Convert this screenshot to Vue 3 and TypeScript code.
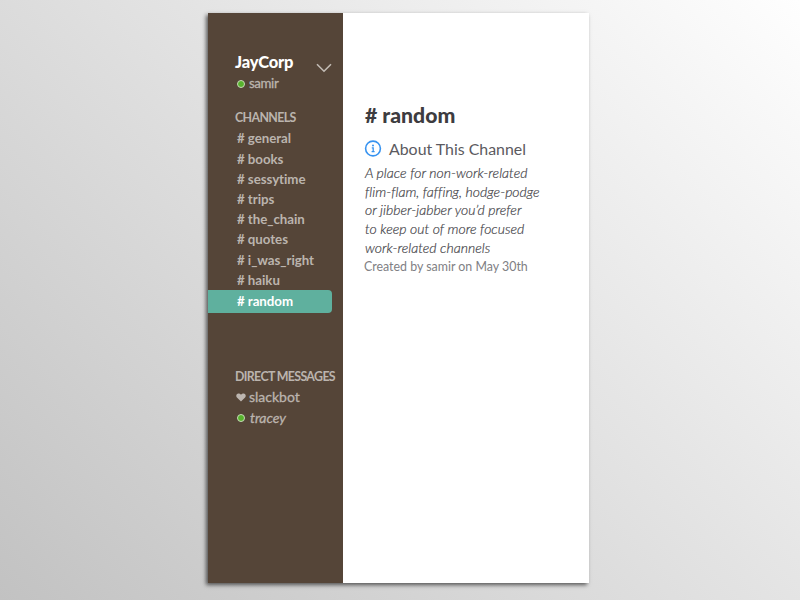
<script setup lang="ts">
interface Channel {
  name: string
  active?: boolean
}

const channels: Channel[] = [
  { name: 'general' },
  { name: 'books' },
  { name: 'sessytime' },
  { name: 'trips' },
  { name: 'the_chain' },
  { name: 'quotes' },
  { name: 'i_was_right' },
  { name: 'haiku' },
  { name: 'random', active: true },
]

const purpose: string[] = [
  'A place for non-work-related',
  'flim-flam, faffing, hodge-podge',
  'or jibber-jabber you’d prefer',
  'to keep out of more focused',
  'work-related channels',
]
</script>

<template>
  <div class="stage">
    <div class="window">
      <aside class="sidebar">
        <header class="team">
          <div class="identity">
            <h1 class="team-name">JayCorp</h1>
            <div class="user"><span class="presence"></span><span>samir</span></div>
          </div>
          <svg class="chevron" width="16" height="10" viewBox="0 0 16 10">
            <path d="M1 1.2 L8 8.2 L15 1.2" fill="none" stroke="#c3bcb5" stroke-width="1.6" />
          </svg>
        </header>
        <h2 class="section">CHANNELS</h2>
        <ul class="channels">
          <li v-for="c in channels" :key="c.name" class="channel" :class="{ active: c.active }"># {{ c.name }}</li>
        </ul>
        <h2 class="section direct">DIRECT MESSAGES</h2>
        <div class="dm">
          <svg class="heart" width="10" height="9" viewBox="0 0 10 9">
            <path d="M5 8.6 L0.9 4.6 C-0.3 3.2 0.2 0.5 2.5 0.4 C3.7 0.4 4.5 1 5 1.8 C5.5 1 6.3 0.4 7.5 0.4 C9.8 0.5 10.3 3.2 9.1 4.6 Z" fill="#bdb6b0" />
          </svg>
          <span class="bot">slackbot</span>
        </div>
        <div class="dm second"><span class="presence"></span><span class="tracey">tracey</span></div>
      </aside>
      <main class="details">
        <h2 class="title"># random</h2>
        <div class="about">
          <svg class="info" width="18" height="18" viewBox="0 0 18 18">
            <circle cx="9" cy="8.5" r="7.4" fill="none" stroke="#3793f0" stroke-width="1.6" />
            <circle cx="9" cy="5.4" r="1" fill="#3793f0" />
            <path d="M7.8 7.8 H9.2 V11.6 M7.6 11.7 H10.6" fill="none" stroke="#3793f0" stroke-width="1.3" />
          </svg>
          <span class="about-text">About This Channel</span>
        </div>
        <p class="purpose"><span v-for="line in purpose" :key="line" class="line">{{ line }}</span></p>
        <p class="created">Created by samir on May 30th</p>
      </main>
    </div>
  </div>
</template>

<style>
body {
  margin: 0;
  overflow: hidden;
}
</style>

<style scoped>
.stage {
  box-sizing: border-box;
  width: 800px;
  height: 600px;
  padding: 13px 0 0 208px;
  background: linear-gradient(45deg, #c2c2c2, #fefefe);
  font-family: Lato, "Liberation Sans", sans-serif;
}
h1, h2, p, ul {
  margin: 0;
  padding: 0;
}
.window {
  display: flex;
  width: 381px;
  height: 570px;
  background: #fff;
  box-shadow: -2px 2px 4px rgba(0, 0, 0, 0.6);
}
.sidebar {
  flex: none;
  width: 135px;
  background: #554538;
  color: #bbb4ae;
  white-space: nowrap;
}
.team {
  display: flex;
  justify-content: space-between;
  padding: 39px 11px 0 27px;
  height: 54px;
}
.team-name {
  font-size: 16.5px;
  line-height: 20px;
  font-weight: 900;
  color: #fff;
  letter-spacing: -0.2px;
}
.user {
  display: flex;
  align-items: center;
  gap: 4px;
  margin-top: 2px;
  padding-left: 2px;
  font-size: 13.3px;
  line-height: 18px;
  letter-spacing: -0.4px;
  -webkit-text-stroke: 0.3px currentColor;
}
.presence {
  box-sizing: border-box;
  width: 8px;
  height: 8px;
  margin-top: 1px;
  border: 1px solid #c9d9b9;
  border-radius: 50%;
  background: #57b32d;
}
.chevron {
  margin-top: 11px;
}
.section {
  padding-left: 27px;
  font-size: 12.4px;
  line-height: 16px;
  font-weight: 700;
  letter-spacing: -0.65px;
  margin-top: 4px;
}
.channels {
  list-style: none;
  margin-top: 2.4px;
}
.channel {
  padding-left: 29px;
  font-size: 13.3px;
  line-height: 20.2px;
  font-weight: 700;
  letter-spacing: -0.05px;
  font-variant-ligatures: common-ligatures;
}
.channel.active {
  width: 95px;
  margin-top: -0.4px;
  line-height: 23px;
  background: #5fb09e;
  color: #fff;
  border-radius: 0 4px 4px 0;
}
.section.direct {
  margin-top: 56px;
}
.dm {
  display: flex;
  align-items: center;
  gap: 3px;
  padding-left: 28px;
  margin-top: 2px;
  font-size: 14px;
  line-height: 20px;
  -webkit-text-stroke: 0.3px currentColor;
}
.dm .heart {
  margin-top: 1px;
}
.dm.second {
  padding-left: 29px;
  gap: 5px;
  margin-top: 1px;
}
.tracey {
  font-style: italic;
}
.details {
  padding: 88px 0 0 22px;
  color: #3d3c40;
  white-space: nowrap;
}
.title {
  font-size: 21.2px;
  line-height: 28px;
  font-weight: 900;
}
.about {
  display: flex;
  align-items: center;
  gap: 7px;
  height: 22px;
  margin: 8px 0 0 -1px;
}
.info {
  margin-top: 2px;
}
.about-text {
  font-size: 15.9px;
  color: #5b5a60;
}
.purpose {
  margin-top: 5px;
  font-size: 14px;
  line-height: 18.7px;
  font-style: italic;
  font-weight: 300;
  letter-spacing: 0.01px;
  font-variant-ligatures: common-ligatures;
  -webkit-text-stroke: 0.2px currentColor;
  color: #454449;
}
.line {
  display: block;
}
.created {
  font-size: 12.4px;
  line-height: 18px;
  color: #808084;
  margin-left: -1px;
}
</style>
